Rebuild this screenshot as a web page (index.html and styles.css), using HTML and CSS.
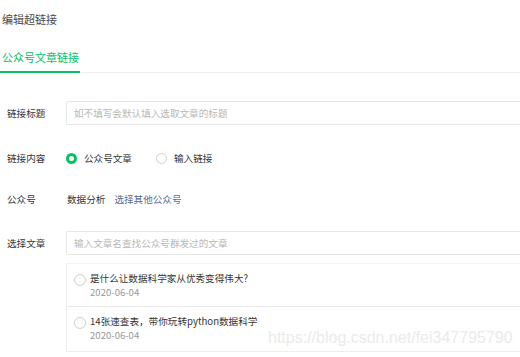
FILE: index.html
```html
<!DOCTYPE html>
<html lang="zh-CN">
<head>
    <meta charset="UTF-8">
    <title>编辑超链接</title>
    <link rel="stylesheet" href="styles.css">
</head>
<body>
    <div class="page">
        <div class="dialog-title">编辑超链接</div>

        <div class="tabs">
            <div class="tab active">公众号文章链接</div>
        </div>

        <div class="form">
            <div class="row row-title">
                <div class="label">链接标题</div>
                <div class="field">
                    <div class="input placeholder">如不填写会默认填入选取文章的标题</div>
                </div>
            </div>

            <div class="row row-content">
                <div class="label">链接内容</div>
                <div class="field radios">
                    <label class="radio checked"><span class="dot"></span>公众号文章</label>
                    <label class="radio"><span class="dot"></span>输入链接</label>
                </div>
            </div>

            <div class="row row-account">
                <div class="label">公众号</div>
                <div class="field">
                    <span class="account">数据分析</span>
                    <a class="link" href="#">选择其他公众号</a>
                </div>
            </div>

            <div class="row row-article">
                <div class="label">选择文章</div>
                <div class="field">
                    <div class="input placeholder">输入文章名查找公众号群发过的文章</div>
                </div>
            </div>

            <div class="article-list">
                <div class="article">
                    <span class="dot"></span>
                    <div class="article-text">
                        <div class="article-name">是什么让数据科学家从优秀变得伟大?</div>
                        <div class="article-date">2020-06-04</div>
                    </div>
                </div>
                <div class="article">
                    <span class="dot"></span>
                    <div class="article-text">
                        <div class="article-name">14张速查表，带你玩转python数据科学</div>
                        <div class="article-date">2020-06-04</div>
                    </div>
                </div>
            </div>
        </div>

        <div class="watermark">https://blog.csdn.net/fei347795790</div>
    </div>
</body>
</html>
```

FILE: styles.css
```css
body {
    margin: 0;
    background: #fff;
    font-family: "Noto Sans CJK SC", "Noto Sans", sans-serif;
    color: #353535;
    overflow: hidden;
}

.page {
    position: relative;
    width: 520px;
    height: 357px;
    overflow: hidden;
}

.dialog-title {
    padding: 12px 0 0 2px;
    font-size: 11px;
    line-height: 14px;
    color: #4a4a4a;
}

.tabs {
    margin-top: 24px;
    border-bottom: 1px solid #eeeeee;
    display: flex;
}

.tab {
    font-size: 11px;
    line-height: 14px;
    padding: 0 1px 7px 2px;
    margin-left: 0;
    color: #07c160;
    border-bottom: 2px solid #07c160;
    margin-bottom: -1px;
}

.form {
    padding-top: 28px;
}

.row {
    display: flex;
    align-items: center;
    height: 24px;
}

.row-content {
    margin-top: 21px;
}

.row-account {
    margin-top: 17px;
}

.row-article {
    margin-top: 20px;
}

.label {
    width: 59px;
    padding-left: 7px;
    font-size: 9.6px;
    color: #353535;
    flex-shrink: 0;
}

.field {
    flex: 1;
    display: flex;
    align-items: center;
    font-size: 9.6px;
}

.input {
    width: 470px;
    height: 22px;
    border: 1px solid #e7e7e7;
    border-radius: 2px;
    box-sizing: content-box;
    padding-left: 7px;
    display: flex;
    align-items: center;
    flex-shrink: 0;
}

.placeholder {
    color: #b8b8b8;
}

.radios {
    gap: 0;
}

.radio {
    display: flex;
    align-items: center;
    color: #353535;
    margin-right: 24px;
}

.dot {
    width: 9px;
    height: 9px;
    border: 1px solid #cfcfcf;
    border-radius: 50%;
    background: #fff;
    flex-shrink: 0;
    margin-right: 7px;
}

.radio.checked .dot {
    width: 5px;
    height: 5px;
    border: 3px solid #07c160;
}

.account {
    margin-left: 1px;
    color: #353535;
}

.link {
    margin-left: 9px;
    color: #576b95;
    text-decoration: none;
}

.article-list {
    margin: 8px 0 0 66px;
    width: 470px;
    border: 1px solid #eeeeee;
    border-top-color: #f4f4f4;
}

.article {
    display: flex;
    align-items: flex-start;
    height: 43px;
    padding-left: 7px;
    box-sizing: border-box;
    border-bottom: 1px solid #e9e9e9;
}

.article:last-child {
    border-bottom: none;
    height: 44px;
}

.article .dot {
    margin-top: 10px;
    width: 10px;
    height: 10px;
    margin-right: 4px;
}

.article-text {
    padding-top: 7px;
    font-size: 9.6px;
    line-height: 14px;
}

.article-name {
    color: #353535;
}

.article-date {
    color: #9a9a9a;
}

.watermark {
    position: absolute;
    left: 268px;
    top: 328px;
    font-family: "Liberation Sans", Arial, sans-serif;
    font-size: 16px;
    line-height: 20px;
    color: #ebebeb;
}
```
